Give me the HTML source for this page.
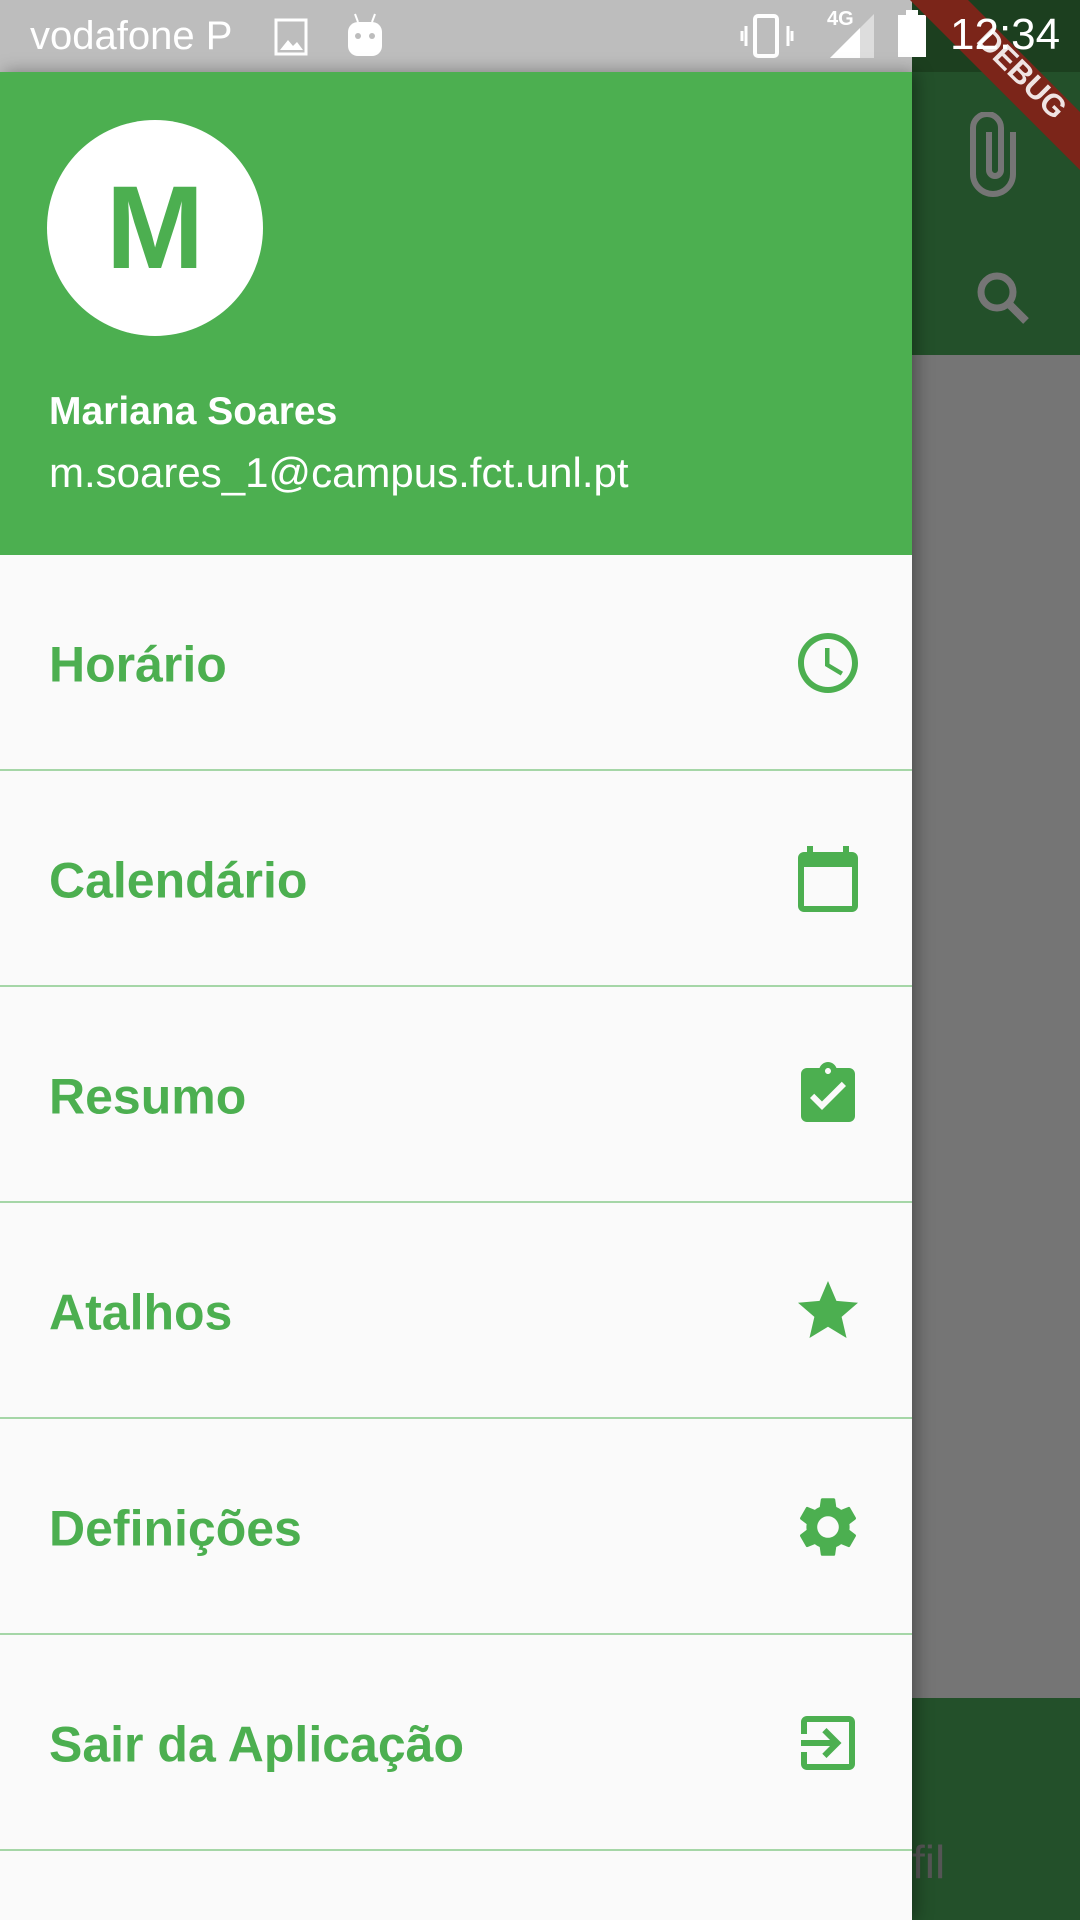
<!DOCTYPE html>
<html><head><meta charset="utf-8"><style>
*{margin:0;padding:0;box-sizing:border-box}
body{width:1080px;height:1920px;overflow:hidden;position:relative;background:#757575;font-family:"Liberation Sans",sans-serif}
.abs{position:absolute}
.item{position:absolute;left:0;width:912px;height:216px;border-bottom:2px solid #a5d6a7}
.item span{position:absolute;left:49px;top:50%;transform:translateY(-46%);font-size:50px;font-weight:bold;color:#4caf50}
.item svg{position:absolute;left:792px;top:72px;width:72px;height:72px;fill:#4caf50}
</style></head><body>
<div class="abs" style="left:0;top:72px;width:1080px;height:283px;background:#23502a"></div>
<div class="abs" style="left:0;top:0;width:1080px;height:72px;background:#1c3f1f"></div>
<div class="abs" style="left:0;top:1698px;width:1080px;height:222px;background:#23502a"></div>
<svg class="abs" style="left:965px;top:112px" width="60" height="90" viewBox="0 0 60 90"><path d="M48 20v42a20 20 0 0 1-40 0V16a14 14 0 0 1 28 0v42a6 6 0 0 1-12 0V20" fill="none" stroke="#757575" stroke-width="6"/></svg>
<svg class="abs" style="left:975px;top:270px" width="60" height="60" viewBox="0 0 60 60"><circle cx="22" cy="22" r="16" fill="none" stroke="#757575" stroke-width="7"/><path d="M33 33l18 18" stroke="#757575" stroke-width="8"/></svg>
<div class="abs" style="left:912px;top:1835px;font-size:46px;color:#555">fil</div>
<div class="abs" style="left:0;top:0;width:912px;height:72px;background:#bdbdbd"></div>
<div class="abs" style="left:30px;top:14px;font-size:40px;color:#fff">vodafone P</div>
<svg class="abs" style="left:274px;top:18px" width="38" height="38" viewBox="0 0 38 38"><rect x="2" y="2" width="30" height="34" fill="none" stroke="#fff" stroke-width="3"/><path d="M6 32l8-10 5 6 4-4 6 8z" fill="#fff"/></svg>
<svg class="abs" style="left:345px;top:12px" width="40" height="46" viewBox="0 0 40 46"><path d="M10 2l3 8M30 2l-3 8" stroke="#fff" stroke-width="2"/><rect x="3" y="10" width="34" height="34" rx="10" fill="#fff"/><circle cx="13" cy="24" r="3" fill="#bdbdbd"/><circle cx="27" cy="24" r="3" fill="#bdbdbd"/></svg>
<svg class="abs" style="left:740px;top:14px" width="56" height="44" viewBox="0 0 56 44"><rect x="15" y="2" width="22" height="40" rx="3" fill="none" stroke="#fff" stroke-width="4"/><path d="M6 12v20M48 12v20M2 17v10M52 17v10" stroke="#fff" stroke-width="3"/></svg>
<div class="abs" style="left:827px;top:8px;font-size:20px;font-weight:bold;color:#fff">4G</div>
<svg class="abs" style="left:830px;top:14px" width="50" height="44" viewBox="0 0 50 44"><path d="M44 0v44H0z" fill="#ddd"/><path d="M30 14v30H0z" fill="#fff"/></svg>
<div class="abs" style="left:898px;top:15px;width:28px;height:42px;background:#fff"></div>
<div class="abs" style="left:906px;top:10px;width:12px;height:6px;background:#fff"></div>
<svg class="abs" style="left:880px;top:0" width="200" height="220" viewBox="880 0 200 220"><polygon points="910,0 968,0 1080,112 1080,170" fill="#7b2519"/></svg>
<div class="abs" style="left:950px;top:10px;font-size:44px;color:#fff">12:34</div>
<div class="abs" style="left:995px;top:22px;font-size:31px;font-weight:bold;color:#fff;transform:rotate(45deg);transform-origin:0 0;opacity:.88">DEBUG</div>
<div class="abs" style="left:0;top:72px;width:912px;height:1848px;background:#fafafa;box-shadow:4px 0 16px rgba(0,0,0,.35)"></div>
<div class="abs" style="left:0;top:72px;width:912px;height:483px;background:#4caf50"></div>
<div class="abs" style="left:47px;top:120px;width:216px;height:216px;border-radius:50%;background:#fff;color:#4caf50;font-weight:bold;font-size:118px;text-align:center;line-height:216px">M</div>
<div class="abs" style="left:49px;top:390px;font-size:39px;font-weight:bold;color:#fff">Mariana Soares</div>
<div class="abs" style="left:49px;top:449px;font-size:42px;color:#fff">m.soares_1@campus.fct.unl.pt</div>
<div class="item" style="top:555px"><span>Horário</span><svg viewBox="0 0 24 24"><path d="M11.99 2C6.47 2 2 6.48 2 12s4.47 10 9.99 10C17.52 22 22 17.52 22 12S17.52 2 11.99 2zM12 20c-4.42 0-8-3.58-8-8s3.58-8 8-8 8 3.58 8 8-3.58 8-8 8zm.5-13H11v6l5.25 3.15.75-1.23-4.5-2.67z"/></svg></div>
<div class="item" style="top:771px"><span>Calendário</span><svg viewBox="0 0 24 24"><path d="M20 3h-1V1h-2v2H7V1H5v2H4c-1.1 0-2 .9-2 2v16c0 1.1.9 2 2 2h16c1.1 0 2-.9 2-2V5c0-1.1-.9-2-2-2zm0 18H4V8h16v13z"/></svg></div>
<div class="item" style="top:987px"><span>Resumo</span><svg viewBox="0 0 24 24"><path d="M19 3h-4.18C14.4 1.84 13.3 1 12 1c-1.3 0-2.4.84-2.82 2H5c-1.1 0-2 .9-2 2v14c0 1.1.9 2 2 2h14c1.1 0 2-.9 2-2V5c0-1.1-.9-2-2-2zm-7 0c.55 0 1 .45 1 1s-.45 1-1 1-1-.45-1-1 .45-1 1-1zm-2 14l-4-4 1.41-1.41L10 14.17l6.59-6.59L18 9l-8 8z"/></svg></div>
<div class="item" style="top:1203px"><span>Atalhos</span><svg viewBox="0 0 24 24"><path d="M12 17.27L18.18 21l-1.64-7.03L22 9.24l-7.19-.61L12 2 9.19 8.63 2 9.24l5.46 4.73L5.82 21z"/></svg></div>
<div class="item" style="top:1419px"><span>Definições</span><svg viewBox="0 0 24 24"><path d="M19.14 12.94c.04-.3.06-.61.06-.94 0-.32-.02-.64-.07-.94l2.03-1.58c.18-.14.23-.41.12-.61l-1.92-3.32c-.12-.22-.37-.29-.59-.22l-2.39.96c-.5-.38-1.03-.7-1.62-.94l-.36-2.54c-.04-.24-.24-.41-.48-.41h-3.84c-.24 0-.43.17-.47.41l-.36 2.54c-.59.24-1.13.57-1.62.94l-2.39-.96c-.22-.08-.47 0-.59.22L2.74 8.87c-.12.21-.08.47.12.61l2.03 1.58c-.05.3-.09.63-.09.94s.02.64.07.94l-2.03 1.58c-.18.14-.23.41-.12.61l1.92 3.32c.12.22.37.29.59.22l2.39-.96c.5.38 1.03.7 1.62.94l.36 2.54c.05.24.24.41.48.41h3.84c.24 0 .44-.17.47-.41l.36-2.54c.59-.24 1.13-.56 1.62-.94l2.39.96c.22.08.47 0 .59-.22l1.92-3.32c.12-.22.07-.47-.12-.61l-2.01-1.58zM12 15.6c-1.98 0-3.6-1.62-3.6-3.6s1.62-3.6 3.6-3.6 3.6 1.62 3.6 3.6-1.62 3.6-3.6 3.6z"/></svg></div>
<div class="item" style="top:1635px"><span>Sair da Aplicação</span><svg viewBox="0 0 24 24"><path d="M10.09 15.59L11.5 17l5-5-5-5-1.41 1.41L12.67 11H3v2h9.670l-2.58 2.59zM19 3H5c-1.11 0-2 .9-2 2v4h2V5h14v14H5v-4H3v4c0 1.1.89 2 2 2h14c1.1 0 2-.9 2-2V5c0-1.1-.9-2-2-2z"/></svg></div>
</body></html>
